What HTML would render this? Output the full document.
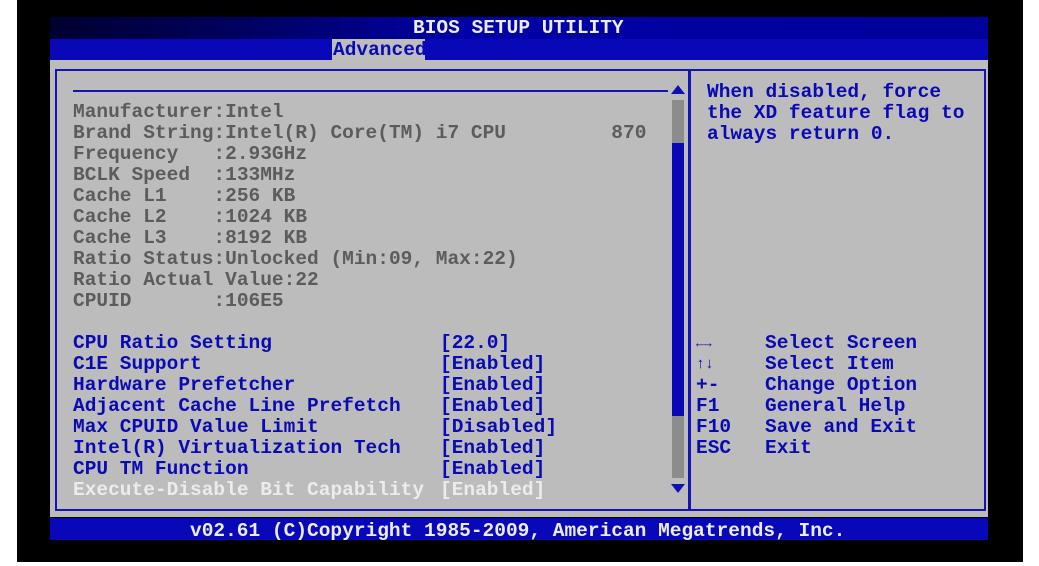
<!DOCTYPE html>
<html><head><meta charset="utf-8"><style>
body{margin:0;width:1039px;height:566px;background:#fff;position:relative;overflow:hidden;font-family:"Liberation Mono",monospace;font-weight:bold;font-size:19.5px}
div{position:absolute}
.t{line-height:21px;white-space:pre;letter-spacing:0}
.g{color:#5c5c5c}.b{color:#0a0ab4}.w{color:#ececec}
</style></head><body>
<div style="left:17px;top:0;width:1006px;height:562px;background:#000"></div>
<div style="left:50px;top:17px;width:938px;height:22px;background:linear-gradient(90deg,#000030,#000060 20%,#0000a8 45%,#00009a)"></div>
<div class="t w" style="left:413px;top:18px">BIOS SETUP UTILITY</div>
<div style="left:50px;top:39px;width:938px;height:21px;background:#0808b8"></div>
<div style="left:332px;top:39px;width:93px;height:21px;background:#bdbdbd"></div>
<div class="t b" style="left:333px;top:40px">Advanced</div>
<div style="left:50px;top:60px;width:938px;height:457px;background:#bcbcbc"></div>
<div style="left:55px;top:69px;width:631px;height:438px;border:2px solid #1414b4"></div>
<div style="left:689px;top:69px;width:293px;height:438px;border:2px solid #1414b4"></div>
<div style="left:73px;top:90px;width:595px;height:2px;background:#1414b4"></div>
<div style="left:671px;top:85px;width:0;height:0;border-left:7px solid transparent;border-right:7px solid transparent;border-bottom:9px solid #1010b0"></div>
<div style="left:672px;top:100px;width:12px;height:43px;background:#8c8c8c"></div>
<div style="left:672px;top:143px;width:12px;height:273px;background:#0808b4"></div>
<div style="left:672px;top:416px;width:12px;height:62px;background:#8c8c8c"></div>
<div style="left:671px;top:484px;width:0;height:0;border-left:7px solid transparent;border-right:7px solid transparent;border-top:9px solid #1010b0"></div>
<div class="t g" style="left:73px;top:102px">Manufacturer:Intel
Brand String:Intel(R) Core(TM) i7 CPU         870
Frequency   :2.93GHz
BCLK Speed  :133MHz
Cache L1    :256 KB
Cache L2    :1024 KB
Cache L3    :8192 KB
Ratio Status:Unlocked (Min:09, Max:22)
Ratio Actual Value:22
CPUID       :106E5</div>
<div class="t b" style="left:73px;top:333px">CPU Ratio Setting
C1E Support
Hardware Prefetcher
Adjacent Cache Line Prefetch
Max CPUID Value Limit
Intel(R) Virtualization Tech
CPU TM Function</div>
<div class="t b" style="left:440px;top:333px">[22.0]
[Enabled]
[Enabled]
[Enabled]
[Disabled]
[Enabled]
[Enabled]</div>
<div class="t w" style="left:73px;top:480px">Execute-Disable Bit Capability</div>
<div class="t w" style="left:440px;top:480px">[Enabled]</div>
<div class="t b" style="left:707px;top:82px">When disabled, force
the XD feature flag to
always return 0.</div>
<div class="t b" style="left:696px;top:333px;font-size:13px">←→</div>
<div class="t b" style="left:696px;top:354px;font-size:15px">↑↓</div>
<div class="t b" style="left:696px;top:375px">+-
F1
F10
ESC</div>
<div class="t b" style="left:765px;top:333px">Select Screen
Select Item
Change Option
General Help
Save and Exit
Exit</div>
<div style="left:50px;top:518px;width:938px;height:22px;background:#0808b8"></div>
<div class="t w" style="left:190px;top:521px">v02.61 (C)Copyright 1985-2009, American Megatrends, Inc.</div>
</body></html>
